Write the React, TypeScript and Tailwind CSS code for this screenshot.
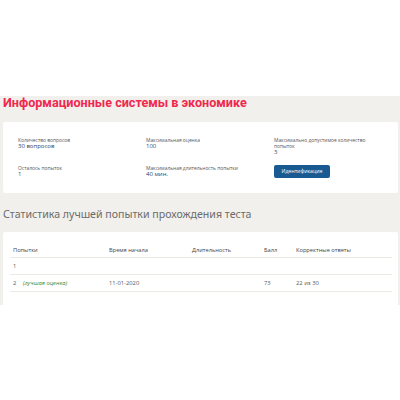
import React from "react";

const InfoItem = ({ label, value, bold }: { label: string; value: string; bold?: boolean }) => (
  <div className="text-[4.9px] leading-[6px] text-[#555]">
    <div>{label}</div>
    <div className={bold ? "text-[#2f3f63] font-medium text-[6px]" : "text-[#3f4a63] text-[6px]"}>{value}</div>
  </div>
);

export default function App() {
  return (
    <div className="w-[400px] h-[400px] bg-white font-['Open_Sans',sans-serif] overflow-hidden">
      <div className="h-[96px]" />
      <div className="h-[209px] bg-[#f1f0ec] pl-[3px] pr-[2px]">
        <h1 className="h-[26px] pt-[1px] text-[12.6px] leading-[12px] font-['Roboto',sans-serif] font-bold text-[#f0284f]">
          Информационные системы в экономике
        </h1>
        <div className="bg-white rounded-[2px] h-[71px] pl-[15px] pt-[15px] grid grid-cols-[128px_128px_100px] grid-rows-[28px_20px]">
          <InfoItem label="Количество вопросов" value="30 вопросов" bold />
          <InfoItem label="Максимальная оценка" value="100" />
          <InfoItem label="Максимально допустимое количество попыток" value="3" />
          <InfoItem label="Осталось попыток" value="1" />
          <InfoItem label="Максимальная длительность попытки" value="40 мин." bold />
          <div>
            <button className="block w-[56px] h-[13px] rounded-[2px] bg-[#1a5a92] text-white text-[5.2px] leading-[13px] font-medium">
              Идентификация
            </button>
          </div>
        </div>
        <h2 className="h-[39px] pt-[13px] text-[10.6px] leading-[16px] text-[#6b6b6b] font-['Noto_Sans',sans-serif]">
          Статистика лучшей попытки прохождения теста
        </h2>
        <div className="bg-white rounded-t-[2px] h-[73px] pl-[7px] pr-[6px] pt-[12px]">
          <div className="grid grid-cols-[96px_83px_72px_32px_1fr] text-[5.7px] leading-[13px] text-[#444] font-medium border-b border-[#ebebe6] pl-[3px]">
            <div>Попытки</div>
            <div>Время начала</div>
            <div>Длительность</div>
            <div>Балл</div>
            <div>Корректные ответы</div>
          </div>
          <div className="h-[17px] text-[5.8px] leading-[16px] text-[#5a5a5a] border-b border-[#ebebe6] pl-[3px]">1</div>
          <div className="grid grid-cols-[96px_83px_72px_32px_1fr] h-[17px] text-[5.8px] leading-[16px] text-[#5a5a5a] border-b border-[#ebebe6] pl-[3px]">
            <div>
              2 <span className="ml-[5px] italic text-[#2f8a3f]">(лучшая оценка)</span>
            </div>
            <div>11-01-2020</div>
            <div />
            <div>73</div>
            <div>22 из 30</div>
          </div>
        </div>
      </div>
    </div>
  );
}
